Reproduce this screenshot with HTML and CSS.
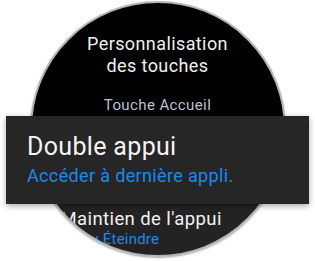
FILE: index.html
```html
<!DOCTYPE html>
<html>
<head>
<meta charset="utf-8">
<link rel="stylesheet" href="styles.css">
<title>Personnalisation des touches</title>
</head>
<body>
  <div class="page">
    <div class="watch">
      <div class="title">Personnalisation<br>des touches</div>
      <div class="section">Touche Accueil</div>
      <div class="item">
        <div class="item-name">Maintien de l'appui</div>
        <div class="item-value">Menu Éteindre</div>
      </div>
    </div>
    <div class="focus">
      <div class="focus-name">Double appui</div>
      <div class="focus-value">Accéder à dernière appli.</div>
    </div>
  </div>
</body>
</html>
```

FILE: styles.css
```css
html, body { margin: 0; background: #fff; }
.page { position: relative; width: 315px; height: 261px; overflow: hidden; font-family: Roboto, "Noto Sans", sans-serif; }
.watch {
  box-sizing: border-box; width: 256px; height: 256px; margin: 1px 0 0 29.5px;
  border-radius: 50%; border: 2px solid #b4b4b4; overflow: hidden;
  background: linear-gradient(#000 0, #000 120px, #232323 120px);
  box-shadow: 0 1px 2px rgba(0,0,0,.35);
  padding-top: 30px;
}
.title { color: #f0f0f0; font-size: 18px; line-height: 22px; letter-spacing: .4px; text-align: center; }
.section { color: #b9c3cf; font-size: 15px; line-height: 18px; letter-spacing: .4px; text-align: center; margin-top: 18.5px; }
.item { margin-top: 94px; padding-left: 29px; white-space: nowrap; }
.item-name { color: #f2f2f2; font-size: 18.5px; line-height: 22px; letter-spacing: .4px; }
.item-value { color: #1a8ae8; font-size: 15px; line-height: 19px; letter-spacing: .2px; }
.focus {
  position: absolute; left: 6px; top: 116px; width: 303px; height: 88px; box-sizing: border-box;
  background: #262626; box-shadow: 0 2px 6px rgba(0,0,0,.35);
  padding: 15.5px 0 0 21px;
}
.focus-name { color: #f4f4f4; font-size: 25px; line-height: 30px; letter-spacing: .33px; }
.focus-value { color: #1a8ae8; font-size: 18px; line-height: 22px; letter-spacing: .35px; margin-top: 3px; }
```
